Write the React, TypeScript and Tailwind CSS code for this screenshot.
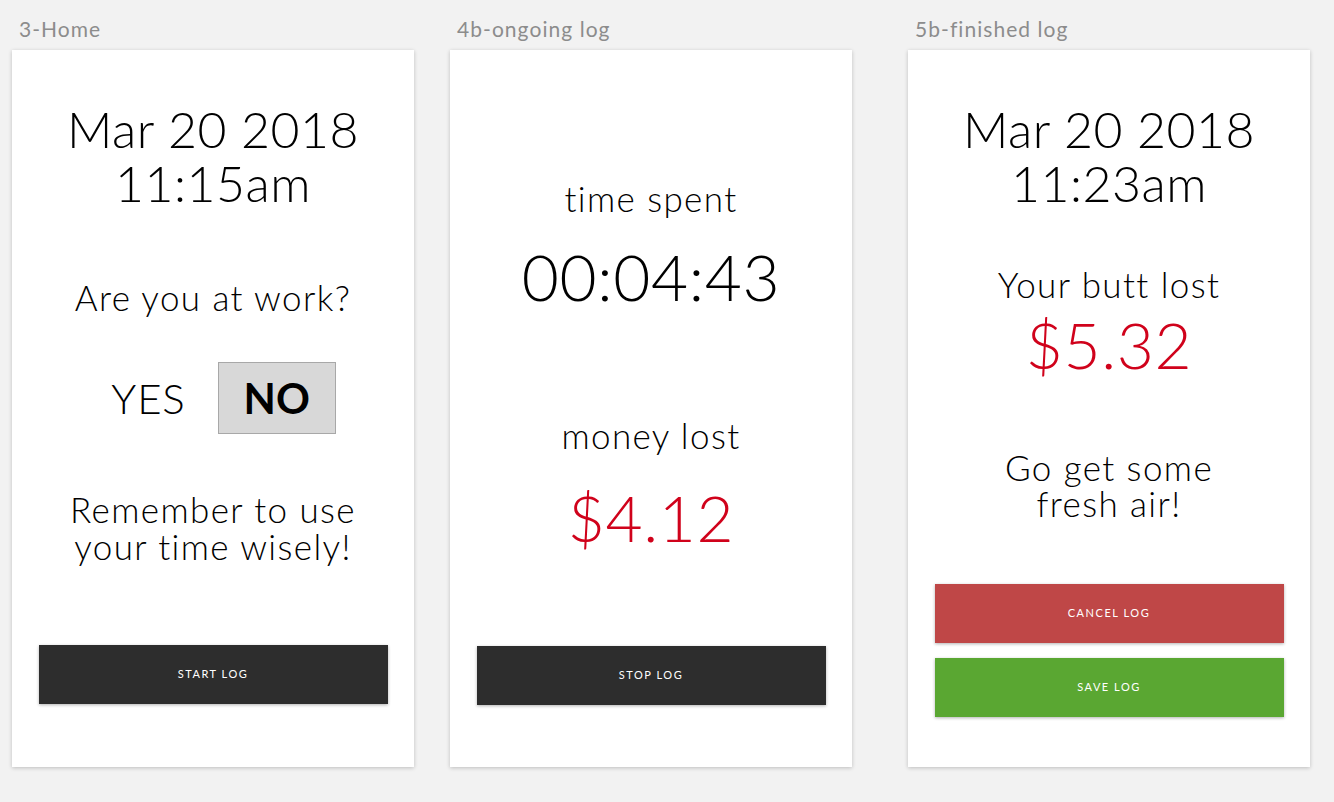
import React from 'react';

const font = { fontFamily: 'Lato, "Noto Sans", sans-serif' };

function Board({ label, children }: { label: string; children: React.ReactNode }) {
  return (
    <div className="flex flex-col">
      <div className="h-[50px] pl-[7px] pt-[17px] text-[21px] leading-[24px] tracking-[0.05em] text-[#8c8c8c]">{label}</div>
      <div className="relative flex h-[717px] w-[402px] flex-col items-center bg-white font-light text-black shadow-[0_1px_4px_rgba(0,0,0,0.22)]">
        {children}
      </div>
    </div>
  );
}

function LogButton({ text, color }: { text: string; color: string }) {
  return (
    <button
      className={`flex h-[59px] w-[349px] items-center justify-center text-[11px] font-normal tracking-[0.14em] text-white shadow-[0_1px_3px_rgba(0,0,0,0.3)] ${color}`}
    >
      {text}
    </button>
  );
}

export default function App() {
  return (
    <div className="flex min-h-screen bg-[#f2f2f2] pl-[12px]" style={font}>
      <Board label="3-Home">
        <div className="mt-[52px] text-center text-[50px] leading-[54px] tracking-[0.01em]">
          <div>Mar 20 2018</div>
          <div>11:15am</div>
        </div>
        <div className="mt-[67px] text-[35px] leading-[40px] tracking-[0.04em]">Are you at work?</div>
        <div className="mt-[45px] flex items-center gap-[32px] pl-[21px]">
          <span className="text-[42px] tracking-[0.02em]">YES</span>
          <span className="flex h-[72px] w-[118px] items-center justify-center border border-[#a8a8a8] bg-[#d8d8d8] text-[42px] font-bold">
            NO
          </span>
        </div>
        <div className="mt-[57px] text-center text-[35px] leading-[37px] tracking-[0.04em]">
          <div>Remember to use</div>
          <div>your time wisely!</div>
        </div>
        <div className="mt-[80px]">
          <LogButton text="START LOG" color="bg-[#2d2d2d]" />
        </div>
      </Board>
      <div className="w-[36px]" />
      <Board label="4b-ongoing log">
        <div className="mt-[128px] text-[35px] leading-[40px] tracking-[0.04em]">time spent</div>
        <div className="mt-[21px] text-[64px] leading-[76px] tracking-[0.01em]">00:04:43</div>
        <div className="mt-[100px] text-[35px] leading-[40px] tracking-[0.04em]">money lost</div>
        <div className="mt-[25px] text-[64px] leading-[76px] tracking-[0.01em] text-[#d0021b]">$4.12</div>
        <div className="mt-[90px]">
          <LogButton text="STOP LOG" color="bg-[#2d2d2d]" />
        </div>
      </Board>
      <div className="w-[56px]" />
      <Board label="5b-finished log">
        <div className="mt-[52px] text-center text-[50px] leading-[54px] tracking-[0.01em]">
          <div>Mar 20 2018</div>
          <div>11:23am</div>
        </div>
        <div className="mt-[54px] text-[35px] leading-[40px] tracking-[0.04em]">Your butt lost</div>
        <div className="mt-[6px] text-[64px] leading-[70px] tracking-[0.01em] text-[#d0021b]">$5.32</div>
        <div className="mt-[69px] text-center text-[35px] leading-[36px] tracking-[0.04em]">
          <div>Go get some</div>
          <div>fresh air!</div>
        </div>
        <div className="mt-[63px]">
          <LogButton text="CANCEL LOG" color="bg-[#bf4747]" />
        </div>
        <div className="mt-[15px]">
          <LogButton text="SAVE LOG" color="bg-[#5aa732]" />
        </div>
      </Board>
    </div>
  );
}
